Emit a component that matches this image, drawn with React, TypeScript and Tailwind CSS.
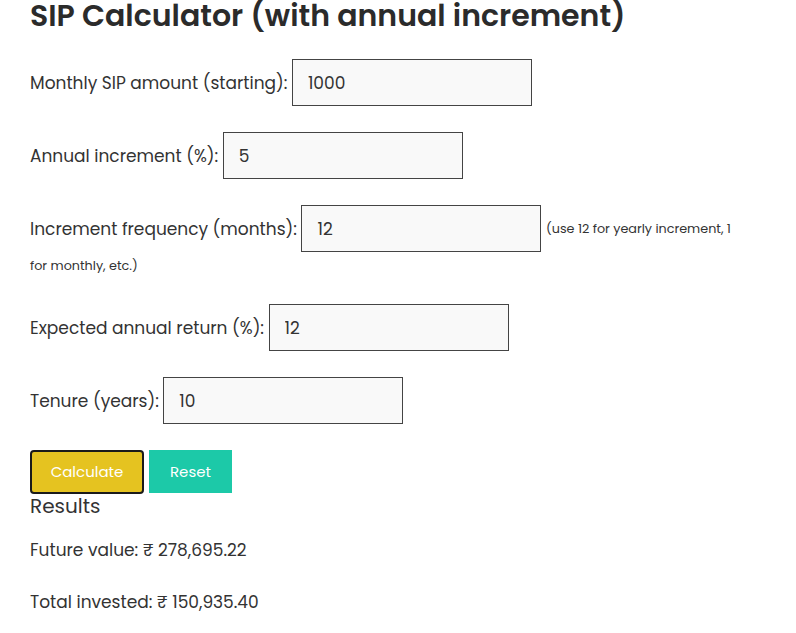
import { useState } from 'react';

type Field = {
  key: string;
  label: string;
  note?: string;
};

const fields: Field[] = [
  { key: 'amount', label: 'Monthly SIP amount (starting):' },
  { key: 'increment', label: 'Annual increment (%):' },
  {
    key: 'frequency',
    label: 'Increment frequency (months):',
    note: '(use 12 for yearly increment, 1 for monthly, etc.)',
  },
  { key: 'rate', label: 'Expected annual return (%):' },
  { key: 'years', label: 'Tenure (years):' },
];

const defaults: Record<string, string> = {
  amount: '1000',
  increment: '5',
  frequency: '12',
  rate: '12',
  years: '10',
};

function compute(v: Record<string, string>) {
  const amount = parseFloat(v.amount) || 0;
  const inc = (parseFloat(v.increment) || 0) / 100;
  const freq = Math.max(1, parseInt(v.frequency) || 12);
  const r = (parseFloat(v.rate) || 0) / 100 / 12;
  const months = (parseFloat(v.years) || 0) * 12;
  let fv = 0;
  let invested = 0;
  let sip = amount;
  for (let m = 0; m < months; m++) {
    if (m > 0 && m % freq === 0) sip = sip * (1 + inc);
    fv = (fv + sip) * (1 + r);
    invested += sip;
  }
  return { fv, invested };
}

const fmt = (n: number) =>
  n.toLocaleString('en-US', { minimumFractionDigits: 2, maximumFractionDigits: 2 });

export default function App() {
  const [values, setValues] = useState(defaults);
  const [result, setResult] = useState({ fv: 278695.22, invested: 150935.4 });

  return (
    <div className="min-h-screen bg-white px-[30px] text-[17px] leading-[26px] text-[#333] font-['Poppins','Open_Sans',sans-serif]">
      <h2 className="mb-[27px] text-[30px] font-semibold leading-[32px] text-[#2b2b2b]">
        SIP Calculator (with annual increment)
      </h2>

      {fields.map((f) => (
        <div key={f.key} className="mb-[26px] max-w-[720px] leading-[24px]">
          <label className="align-middle">{f.label}</label>{' '}
          <input
            value={values[f.key]}
            onChange={(e) => setValues({ ...values, [f.key]: e.target.value })}
            className="h-[47px] w-[240px] border border-[#444] bg-[#f9f9f9] px-[15px] align-middle text-[17px] text-[#333] outline-none"
          />{' '}
          {f.note && <span className="text-[12.75px]">{f.note}</span>}
        </div>
      ))}

      <div className="flex gap-[5px]">
        <button
          onClick={() => setResult(compute(values))}
          className="h-[44px] w-[114px] rounded-[4px] border-2 border-[#1a1a1a] bg-[#e5c320] text-[15px] text-white"
        >
          Calculate
        </button>
        <button
          onClick={() => setValues(defaults)}
          className="h-[43px] w-[83px] bg-[#1cc9a8] text-[15px] text-white"
        >
          Reset
        </button>
      </div>

      <h3 className="mb-[19px] text-[20px] leading-[24px]">Results</h3>
      <p className="mb-[26px]">Future value: ₹ {fmt(result.fv)}</p>
      <p>Total invested: ₹ {fmt(result.invested)}</p>
    </div>
  );
}
